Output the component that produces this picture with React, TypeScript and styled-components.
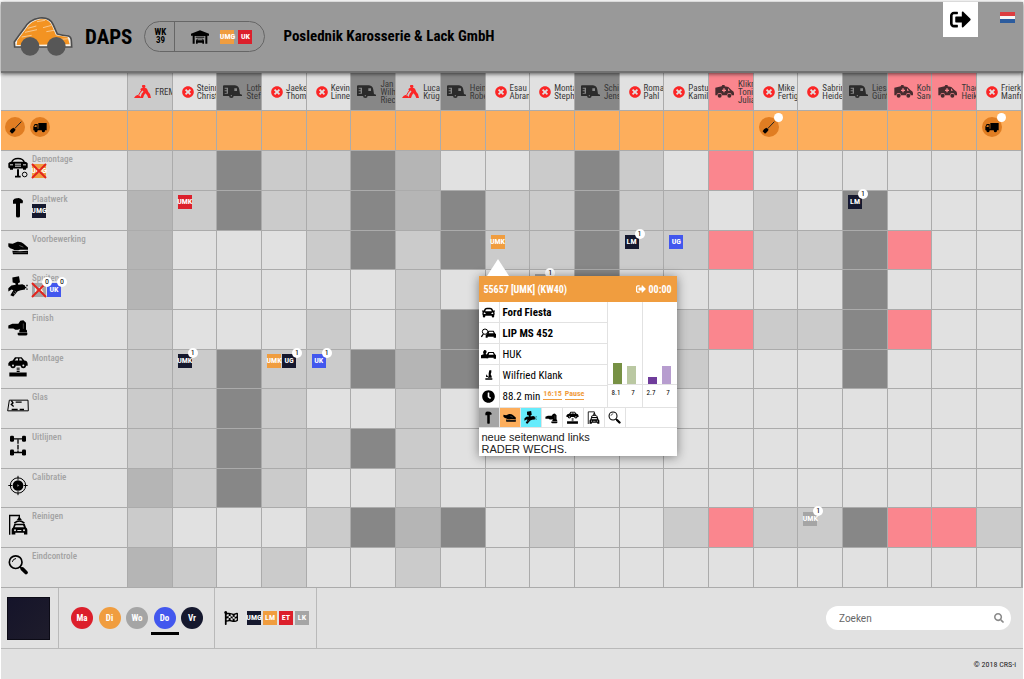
import React from "react";
import styled, { createGlobalStyle, css } from "styled-components";
import { FaSearch, FaTimesCircle, FaClock, FaSignOutAlt, FaFlagCheckered, FaCar } from "react-icons/fa";

const condensed = `"Roboto Condensed", "Liberation Sans Narrow", Roboto, sans-serif`;
const colors = {
  red: "#dc1f2b",
  orange: "#f09d3f",
  gray: "#a5a5a5",
  blue: "#4257ee",
  navy: "#15182e",
};
type Tone = keyof typeof colors;
const shades = { l: "#e1e1e1", s: "#cbcbcb", m: "#b5b5b5", d: "#878787", p: "#fa868e" };
type Shade = keyof typeof shades;

const GlobalStyle = createGlobalStyle`
  * { box-sizing: border-box; }
  body { margin: 0; background: #fff; font-family: ${condensed}; color: #000; }
  button { font: inherit; border: 0; padding: 0; background: none; cursor: pointer; color: inherit; }
  svg { display: block; flex: none; }
`;

/* ---------- icons ---------- */

type IconProps = { w: number; h: number };

const LiftedCarFront = ({ w, h }: IconProps) => (
  <svg width={w} height={h} viewBox="0 0 60 62">
    <path d="M11 16Q14 4 30 4T49 16" fill="none" stroke="#000" strokeWidth="4" />
    <path d="M1 18Q5 12 12 14H48Q55 12 59 18V31Q59 34 54 34V38H45V34H15V38H6V34Q1 33 1 30Z" />
    <path d="M6 23h9M45 23h9M21 21h18M21 27h18" stroke="#e1e1e1" strokeWidth="3" />
    <path d="M27 36h6v20h5v5H21v-5h6z" />
    <circle cx="50" cy="52" r="7" fill="none" stroke="#000" strokeWidth="3" />
  </svg>
);
const Hammer = ({ w, h }: IconProps) => (
  <svg width={w} height={h} viewBox="0 0 60 62">
    <path d="M15 9Q19 2 28 3Q38 1 45 11L44 18H36V57Q36 61 30 61T24 57V20H15Z" />
  </svg>
);
const SandingHand = ({ w, h }: IconProps) => (
  <svg width={w} height={h} viewBox="0 0 60 62">
    <path d="M1 18L14 20L28 14Q40 13 46 19L60 31V38H36Q22 42 15 36Q5 34 1 28Z" />
    <path d="M34 25L46 30" stroke="#888" strokeWidth="2" />
    <path d="M13 41Q34 43 60 41V51H15Z" />
    <path d="M16 46H58" stroke="#999" strokeWidth="1" />
  </svg>
);
const SprayGun = ({ w, h }: IconProps) => (
  <svg width={w} height={h} viewBox="0 0 60 62">
    <path d="M13 4L33 0L36 18L30 21L31 26L43 24L51 28V40L38 42L29 45L16 61L7 57L16 42L11 40L1 46V36L10 28L23 26L22 21L14 19Z" />
    <path d="M50 34h5M57 26v4M57 37v4" stroke="#000" strokeWidth="4" />
    <path d="M20 45l5 4M16 50l5 4" stroke="#bbb" strokeWidth="2" />
  </svg>
);
const Polisher = ({ w, h }: IconProps) => (
  <svg width={w} height={h} viewBox="0 0 60 62">
    <path d="M1 28L13 23H31L37 14L46 12L54 20V40L57 43V49H34V44L36 38L30 41H22L16 37H1Z" />
    <path d="M29 50H58V55Q58 58 53 58H34Q29 58 29 55Z" />
    <path d="M46 22V38" stroke="#666" strokeWidth="2" />
  </svg>
);
const CarOnLift = ({ w, h }: IconProps) => (
  <svg width={w} height={h} viewBox="0 0 60 62">
    <path d="M1 21Q4 14 14 13L21 3H41L49 13Q58 13 59 23V29H1Z" />
    <path d="M20 13L25 7H30V13ZM34 7H39L43 13H34Z" fill="#e1e1e1" />
    <circle cx="15" cy="28" r="8" />
    <circle cx="15" cy="28" r="3" fill="#e1e1e1" />
    <circle cx="46" cy="28" r="8" />
    <circle cx="46" cy="28" r="3" fill="#e1e1e1" />
    <path d="M26 36h9M26 41h9M26 46h9" stroke="#000" strokeWidth="3" />
    <path d="M4 49H56V61H4Z" />
  </svg>
);
const WindowGlass = ({ w, h }: IconProps) => (
  <svg width={w} height={h} viewBox="0 0 66 62">
    <path d="M7 15H63L64 47H2Z" fill="none" stroke="#000" strokeWidth="3" />
    <path d="M13 16l5 7-5 5 7 6M26 21h18M14 43h18M38 43h13" fill="none" stroke="#000" strokeWidth="4" />
  </svg>
);
const WheelAxles = ({ w, h }: IconProps) => (
  <svg width={w} height={h} viewBox="0 0 60 62">
    <path d="M30 12V52" stroke="#000" strokeWidth="4" strokeDasharray="14 3" />
    <path d="M12 11H48M12 52H48" stroke="#000" strokeWidth="4" />
    <rect x="6" y="2" width="12" height="18" rx="4" />
    <rect x="42" y="2" width="12" height="18" rx="4" />
    <rect x="6" y="43" width="12" height="18" rx="4" />
    <rect x="42" y="43" width="12" height="18" rx="4" />
  </svg>
);
const Target = ({ w, h }: IconProps) => (
  <svg width={w} height={h} viewBox="0 0 60 62">
    <circle cx="30" cy="31" r="23" fill="none" stroke="#000" strokeWidth="3" />
    <circle cx="30" cy="31" r="16" />
    <path d="M30 2V14M30 48V60M1 31H13M47 31H59" stroke="#000" strokeWidth="3" />
    <path d="M28 27L34 31L28 35Z" fill="#888" />
  </svg>
);
const CarWash = ({ w, h }: IconProps) => (
  <svg width={w} height={h} viewBox="0 0 60 62">
    <path d="M5 62V4H34V12" fill="none" stroke="#000" strokeWidth="4" />
    <path d="M34 7L42 18H26Z" />
    <path d="M19 27Q34 14 49 27" fill="none" stroke="#000" strokeWidth="5" />
    <path d="M19 29H50L54 40Q58 42 58 47V61H48V56H22V61H11V47Q11 42 15 40Z" />
    <path d="M23 33H45L48 39H20Z" fill="#e1e1e1" />
    <circle cx="21" cy="48" r="3" fill="#e1e1e1" />
    <circle cx="48" cy="48" r="3" fill="#e1e1e1" />
    <path d="M28 49h12" stroke="#e1e1e1" strokeWidth="3" />
  </svg>
);
const Magnifier = ({ w, h }: IconProps) => (
  <svg width={w} height={h} viewBox="0 0 60 62">
    <circle cx="23" cy="24" r="19" fill="none" stroke="#000" strokeWidth="5" />
    <path d="M13 23Q15 14 24 13" fill="none" stroke="#000" strokeWidth="3" />
    <path d="M36 38L42 44" stroke="#000" strokeWidth="5" />
    <path d="M43 44L54 55" stroke="#000" strokeWidth="11" strokeLinecap="round" />
  </svg>
);
const Caravan = () => (
  <svg width="19" height="13" viewBox="0 0 57 39" fill="#2b2b2b">
    <path
      fillRule="evenodd"
      d="M3 1H36Q47 2 49 14L51 27L57 29V33H1Q0 33 0 30V4Q0 1 3 1ZM5 8V11H11V16H5V19H11V24H5V26H15V8ZM34 10V18H42V10Z"
    />
    <circle cx="25" cy="32" r="7" />
    <circle cx="25" cy="32" r="2" fill="#878787" />
  </svg>
);
const Digger = () => (
  <svg width="17" height="13" viewBox="0 0 51 39" fill="#fb2626">
    <circle cx="29" cy="4" r="5" />
    <path d="M19 12L30 6L39 11L43 21L48 27L51 39H43L39 30L34 25L30 31L27 39H19L23 26L28 20L27 16L22 20Z" />
    <path d="M22 11L48 33M21 18L14 30" stroke="#fb2626" strokeWidth="3" />
    <path d="M0 39Q4 31 10 30Q18 29 22 39Z" />
  </svg>
);
const Ambulance = () => (
  <svg width="19" height="13" viewBox="0 0 57 39" fill="#472c2f">
    <path d="M1 8L20 4L22 0H29V4L40 6L50 16Q57 19 57 24V31H50A7 7 0 0 0 36 31H21A7 7 0 0 0 7 31H1Z" />
    <path d="M25 10h4v4h4v4h-4v4h-4v-4h-4v-4h4z" fill="#fa868e" />
    <path d="M39 10l6 7h-6z" fill="#fa868e" />
    <circle cx="14" cy="32" r="6" />
    <circle cx="43" cy="32" r="6" />
  </svg>
);
const Broom = () => (
  <svg width="13" height="13" viewBox="0 0 39 39">
    <path d="M37 2L17 23" stroke="#222" strokeWidth="3" />
    <path d="M13 20L20 26L15 33L9 38L2 31L6 25Z" />
  </svg>
);
const Truck = () => (
  <svg width="14" height="11" viewBox="0 0 42 33">
    <path
      fillRule="evenodd"
      d="M16 3H41V25H36A5 5 0 0 1 26 25H14A5 5 0 0 1 4 25H1V14L5 6H14V20H16ZM6 10L4 15H11V10Z"
    />
    <circle cx="9" cy="27" r="4" />
    <circle cx="31" cy="27" r="4" />
  </svg>
);
const Garage = () => (
  <svg width="18" height="14" viewBox="0 0 54 42">
    <path d="M27 1L54 11V17H49V41H43V18H11V41H5V17H0V11Z" />
    <path d="M14 20h26v3H14z" />
    <path
      fillRule="evenodd"
      d="M18 26H36L39 32V41H34V38H20V41H15V32ZM20 28L19 31H35L34 28Z"
    />
  </svg>
);
const PlateSearch = () => (
  <svg width="15" height="10" viewBox="0 0 45 30">
    <circle cx="12" cy="11" r="8" fill="none" stroke="#000" strokeWidth="3" />
    <path d="M7 18L1 27" stroke="#000" strokeWidth="4" />
    <path fillRule="evenodd" d="M22 8H38L42 16L45 19V29H38V26H20V29H14V22L19 16ZM25 11L23 16H38L36 11Z" />
  </svg>
);
const PersonCar = () => (
  <svg width="15" height="10" viewBox="0 0 45 30">
    <path d="M10 3Q17 2 17 9L14 15L20 18V28H0V19L8 16L6 9Z" />
    <path fillRule="evenodd" d="M22 9H38L42 16L45 19V29H38V26H22V28H17V17ZM25 12L23 17H38L36 12Z" />
  </svg>
);
const Seated = () => (
  <svg width="8" height="10" viewBox="0 0 24 30">
    <path d="M13 1h6v6l-2 6 3 6v4H8l3-4V10ZM4 13l6 8H3ZM1 25H22V29H1Z" />
  </svg>
);
const CarLogo = () => (
  <svg width="60" height="40" viewBox="0 0 180 120" aria-label="DAPS">
    <path
      d="M5 90L4 75Q18 55 34 34Q48 8 80 3Q110 0 120 22L133 51Q148 55 166 57Q175 60 175 72L176 90Z"
      fill="#f7f2ea"
      stroke="#4d4d4d"
      strokeWidth="5"
    />
    <path d="M11 84L13 70Q28 50 40 34Q54 12 82 7Q106 4 116 24L129 55Q150 58 164 61L170 82Z" fill="#f39322" />
    <path
      d="M44 34L70 27M36 46L72 38M90 32L116 25M100 44L123 40M26 60L56 55M134 68L166 65M72 14L96 10"
      stroke="#fbe3c4"
      strokeWidth="2"
    />
    <circle cx="51" cy="88" r="28" fill="#575757" />
    <circle cx="130" cy="88" r="28" fill="#575757" />
  </svg>
);
const DutchFlag = () => (
  <svg width="15" height="11" viewBox="0 0 15 11">
    <rect width="15" height="4" fill="#dc3d40" />
    <rect y="4" width="15" height="3" fill="#f6f6f6" />
    <rect y="7" width="15" height="4" fill="#2c5c9e" />
  </svg>
);

/* ---------- shared parts ---------- */

const ChipBox = styled.span<{ $tone: Tone }>`
  position: relative;
  display: flex;
  align-items: center;
  justify-content: center;
  width: 14px;
  height: 14px;
  background: ${(p) => colors[p.$tone]};
  color: #fff;
  font-size: 8px;
  font-weight: 700;
  line-height: 14px;
  white-space: nowrap;
`;
const Badge = styled.span`
  position: absolute;
  top: -6px;
  right: -6px;
  z-index: 1;
  width: 10px;
  height: 10px;
  border-radius: 50%;
  background: #fff;
  color: #000;
  font-size: 8px;
  font-weight: 400;
  line-height: 10px;
  text-align: center;
`;
const CrossMark = styled.svg`
  position: absolute;
  inset: -1px;
`;
type ChipData = { t: string; tone: Tone; n?: number; crossed?: boolean };
const Chip = ({ t, tone, n, crossed }: ChipData) => (
  <ChipBox $tone={tone}>
    {t}
    {crossed && (
      <CrossMark width="16" height="16" viewBox="0 0 16 16">
        <path d="M1 1L15 15M15 1L1 15" stroke="#e3241d" strokeWidth="2" />
      </CrossMark>
    )}
    {n !== undefined && <Badge>{n}</Badge>}
  </ChipBox>
);

/* ---------- top bar ---------- */

const Page = styled.div`
  margin: 2px 1px 0;
  min-height: calc(100vh - 2px);
  background: #e1e1e1;
`;
const TopBar = styled.header`
  position: relative;
  z-index: 2;
  display: flex;
  align-items: center;
  height: 71px;
  padding: 0 8px 0 12px;
  background: #999;
  border-bottom: 2px solid #717171;
  box-shadow: 0 1px 4px rgba(0, 0, 0, 0.6);
`;
const Brand = styled.h1`
  margin: 0 12px;
  font-size: 21px;
  line-height: 26px;
`;
const WeekPill = styled.div`
  display: flex;
  align-items: center;
  height: 31px;
  border: 1px solid #666;
  border-radius: 16px;
`;
const Week = styled.div`
  width: 30px;
  height: 29px;
  padding: 6px 0 0 1px;
  border-right: 1px solid #666;
  font-size: 9px;
  font-weight: 700;
  line-height: 8px;
  text-align: center;
`;
const PillChips = styled.div`
  display: flex;
  align-items: center;
  gap: 4px;
  padding: 0 12px 0 16px;
  svg { margin-right: 7px; }
`;
const Company = styled.h2`
  margin: 0 auto 2px 18px;
  font-size: 15px;
  line-height: 20px;
`;
const Exit = styled.button`
  align-self: flex-start;
  display: flex;
  align-items: center;
  justify-content: center;
  width: 35px;
  height: 35px;
  margin-right: 22px;
  background: #fff;
  font-size: 21px;
`;
const Language = styled.button`
  align-self: flex-start;
  margin-top: 10px;
`;

/* ---------- planning board ---------- */

const Board = styled.table`
  width: 100%;
  table-layout: fixed;
  border-collapse: separate;
  border-spacing: 0;
  border-right: 1px solid #ababab;
  th, td {
    padding: 0;
    border-right: 1px solid #ababab;
    border-bottom: 1px solid #ababab;
    vertical-align: top;
    text-align: left;
    font-weight: 400;
  }
`;
const LabelCol = styled.col`
  width: 127px;
`;
const StaffRow = styled.tr`
  height: 38px;
`;
const StatusRow = styled.tr`
  height: 40px;
  background: #fdae5c;
`;
const TaskRow = styled.tr`
  height: 40px;
  &:nth-child(3n) { height: 39px; }
`;
const StaffCell = styled.th<{ $shade: Shade }>`
  background: ${(p) => shades[p.$shade]};
`;
const Staff = styled.div<{ $free: boolean }>`
  display: flex;
  align-items: center;
  gap: ${(p) => (p.$free ? 3 : 4)}px;
  height: 37px;
  padding-left: ${(p) => (p.$free ? 9 : 6)}px;
  overflow: hidden;
  color: #383838;
  font-size: 9px;
  line-height: 8px;
  white-space: nowrap;
`;
const NameLine = styled.span`
  display: block;
`;
const Cell = styled.td<{ $shade?: Shade }>`
  position: relative;
  ${(p) => p.$shade && css`background: ${shades[p.$shade]};`}
`;
const Chips = styled.div`
  display: flex;
  gap: 1px;
  padding: 4px 0 0 5px;
`;
const Discs = styled.div<{ $lead: number }>`
  display: flex;
  gap: 5px;
  padding: 6px 0 0 ${(p) => p.$lead}px;
`;
const Disc = styled.span`
  position: relative;
  display: flex;
  align-items: center;
  justify-content: center;
  width: 20px;
  height: 20px;
  border-radius: 50%;
  background: #e07d22;
`;
const Dot = styled.span`
  position: absolute;
  top: -4px;
  right: -4px;
  width: 9px;
  height: 9px;
  border-radius: 50%;
  background: #fff;
`;
const Task = styled.div`
  display: flex;
  gap: 3px;
  height: 38px;
  padding-left: 6px;
`;
const TaskIcon = styled.div`
  display: flex;
  justify-content: center;
  width: 22px;
  padding-top: 6px;
`;
const TaskName = styled.div`
  padding-top: 3px;
  color: #a3a3a3;
  font-size: 9px;
  font-weight: 500;
  line-height: 10px;
`;
const TaskChips = styled.div`
  display: flex;
  gap: 1px;
`;

/* ---------- order card ---------- */

const Card = styled.section`
  position: absolute;
  top: 45px;
  left: -7px;
  z-index: 5;
  width: 198px;
  background: #fff;
  box-shadow: 0 1px 10px rgba(0, 0, 0, 0.45);
  &::before {
    content: "";
    position: absolute;
    top: -17px;
    left: 8px;
    border: 11px solid transparent;
    border-top: 0;
    border-bottom: 17px solid #fff;
  }
`;
const CardHead = styled.header`
  display: flex;
  align-items: center;
  gap: 3px;
  height: 26px;
  padding: 0 5px;
  background: #f09d3f;
  color: #fff;
  font-size: 10px;
  font-weight: 700;
  span { margin-right: auto; }
`;
const CardBody = styled.div`
  display: flex;
  height: 105px;
`;
const Facts = styled.div`
  flex: 1;
  display: grid;
  grid-template-rows: repeat(5, 1fr);
`;
const Fact = styled.div<{ $strong?: boolean }>`
  display: flex;
  border-bottom: 1px solid #e2e2e2;
  font-size: 11px;
  font-weight: ${(p) => (p.$strong ? 700 : 400)};
  &:last-child { border-bottom: 0; }
`;
const FactIcon = styled.div`
  display: flex;
  align-items: center;
  justify-content: center;
  width: 21px;
  border-right: 1px solid #e2e2e2;
`;
const FactText = styled.div`
  display: flex;
  align-items: center;
  gap: 3px;
  padding-left: 3px;
`;
const TimeLink = styled.a`
  margin-bottom: 4px;
  border-bottom: 1px solid #f09d3f;
  color: #f09d3f;
  font-size: 8px;
  font-weight: 700;
  line-height: 10px;
  text-decoration: none;
`;
const Chart = styled.div`
  width: 35px;
  border-left: 1px solid #e2e2e2;
`;
const Bars = styled.div`
  display: flex;
  align-items: flex-end;
  justify-content: center;
  gap: 5px;
  height: 83px;
  border-bottom: 1px solid #e2e2e2;
`;
const Bar = styled.div<{ $fill: string }>`
  width: 9px;
  background: ${(p) => p.$fill};
`;
const Values = styled.div`
  display: flex;
  padding-top: 3px;
  font-size: 7px;
  line-height: 10px;
  text-align: center;
  span { flex: 1; }
`;
const Steps = styled.div`
  display: flex;
  height: 21px;
  border-top: 1px solid #e2e2e2;
  border-bottom: 1px solid #e2e2e2;
`;
const Step = styled.button<{ $fill?: string }>`
  display: flex;
  align-items: center;
  justify-content: center;
  width: 21px;
  border-right: 1px solid #e2e2e2;
  background: ${(p) => p.$fill ?? "#fff"};
`;
const Note = styled.p`
  margin: 0;
  padding: 3px 3px 1px;
  color: #222;
  font-family: "Liberation Sans", Arial, sans-serif;
  font-size: 11px;
  line-height: 12px;
`;

const OrderCard = () => (
  <Card>
    <CardHead>
      <span>55657 [UMK] (KW40)</span>
      <FaSignOutAlt size={10} />
      00:00
    </CardHead>
    <CardBody>
      <Facts>
        <Fact $strong>
          <FactIcon><FaCar size={13} /></FactIcon>
          <FactText>Ford Fiesta</FactText>
        </Fact>
        <Fact $strong>
          <FactIcon><PlateSearch /></FactIcon>
          <FactText>LIP MS 452</FactText>
        </Fact>
        <Fact>
          <FactIcon><PersonCar /></FactIcon>
          <FactText>HUK</FactText>
        </Fact>
        <Fact>
          <FactIcon><Seated /></FactIcon>
          <FactText>Wilfried Klank</FactText>
        </Fact>
        <Fact>
          <FactIcon><FaClock size={13} /></FactIcon>
          <FactText>
            88.2 min <TimeLink href="#time">16:15</TimeLink>
            <TimeLink href="#pause">Pause</TimeLink>
          </FactText>
        </Fact>
      </Facts>
      <Chart>
        <Bars>
          <Bar $fill="#779144" style={{ height: 21 }} />
          <Bar $fill="#bac8a2" style={{ height: 18 }} />
        </Bars>
        <Values><span>8.1</span><span>7</span></Values>
      </Chart>
      <Chart>
        <Bars>
          <Bar $fill="#6f3c9b" style={{ height: 7 }} />
          <Bar $fill="#b79dcf" style={{ height: 18 }} />
        </Bars>
        <Values><span>2.7</span><span>7</span></Values>
      </Chart>
    </CardBody>
    <Steps>
      <Step $fill="#a5a5a5" aria-label="Plaatwerk"><Hammer w={13} h={13} /></Step>
      <Step $fill="#fdae5c" aria-label="Voorbewerking"><SandingHand w={13} h={13} /></Step>
      <Step $fill="#66ecfc" aria-label="Spuiten"><SprayGun w={13} h={13} /></Step>
      <Step aria-label="Finish"><Polisher w={13} h={13} /></Step>
      <Step aria-label="Montage"><CarOnLift w={13} h={13} /></Step>
      <Step aria-label="Reinigen"><CarWash w={13} h={13} /></Step>
      <Step aria-label="Eindcontrole"><Magnifier w={13} h={13} /></Step>
    </Steps>
    <Note>
      neue seitenwand links
      <br />
      RADER WECHS.
    </Note>
  </Card>
);

/* ---------- bottom bars ---------- */

const BottomBar = styled.div`
  display: flex;
  height: 61px;
  border-bottom: 1px solid #b9b9b9;
`;
const Panel = styled.div<{ $lead: number; $tail: number }>`
  display: flex;
  align-items: center;
  padding: 0 ${(p) => p.$tail}px 0 ${(p) => p.$lead}px;
  border-right: 1px solid #b9b9b9;
`;
const Swatch = styled.div`
  width: 43px;
  height: 43px;
  border: 1px solid #0c0b16;
  background: linear-gradient(135deg, #15142a, #1e1c2b);
`;
const Days = styled.div`
  display: flex;
  justify-content: space-between;
  width: 132px;
`;
const Day = styled.button<{ $tone: Tone; $active?: boolean }>`
  position: relative;
  width: 22px;
  height: 22px;
  border-radius: 50%;
  background: ${(p) => colors[p.$tone]};
  color: #fff;
  font-size: 9px;
  font-weight: 700;
  ${(p) =>
    p.$active &&
    css`
      &::after {
        content: "";
        position: absolute;
        left: -3px;
        right: -3px;
        bottom: -6px;
        height: 3px;
        background: #000;
      }
    `}
`;
const FlagChips = styled.div`
  display: flex;
  gap: 2px;
  margin-left: 9px;
`;
const Search = styled.label`
  display: flex;
  align-items: center;
  width: 185px;
  height: 24px;
  margin: auto 12px auto auto;
  padding: 0 7px 0 13px;
  border-radius: 12px;
  background: #fff;
  color: #8a8a8a;
`;
const SearchInput = styled.input`
  flex: 1;
  min-width: 0;
  padding: 0;
  border: 0;
  outline: 0;
  background: none;
  font: 10px Roboto, sans-serif;
  &::placeholder { color: #666; opacity: 1; }
`;
const Legal = styled.footer`
  height: 28px;
  padding: 11px 7px 0;
  font-size: 8px;
  line-height: 10px;
  text-align: right;
  color: #222;
`;

/* ---------- data ---------- */

type Kind = "free" | "van" | "dig" | "sick";
const kindShade: Record<Kind, Shade> = { free: "l", van: "d", dig: "s", sick: "p" };
const staff: [Kind, string[]][] = [
  ["dig", ["FREMD"]],
  ["free", ["Steinmann", "Christian"]],
  ["van", ["Lothar", "Stefan"]],
  ["free", ["Jaekel", "Thomas"]],
  ["free", ["Kevin", "Linnert"]],
  ["van", ["Jan", "Wilhelm", "Riechert"]],
  ["dig", ["Luca", "Krüger"]],
  ["van", ["Heiner", "Robert"]],
  ["free", ["Esau", "Abramo"]],
  ["free", ["Montag", "Stephan"]],
  ["van", ["Schinke", "Jens"]],
  ["free", ["Roman", "Pahl"]],
  ["free", ["Pastuch", "Kamil"]],
  ["sick", ["Klikner", "Toni-", "Julian"]],
  ["free", ["Mike", "Fertig"]],
  ["free", ["Sabrina", "Heider"]],
  ["van", ["Liesel", "Günter"]],
  ["sick", ["Kohr", "Sandra"]],
  ["sick", ["Thacke", "Heiko"]],
  ["free", ["Frierk", "Manfred"]],
];

type TaskData = {
  name: string;
  icon: React.ReactNode;
  shades: string;
  own?: ChipData[];
  jobs?: Record<number, ChipData[]>;
  card?: number;
};
const tasks: TaskData[] = [
  {
    name: "Demontage",
    icon: <LiftedCarFront w={20} h={21} />,
    shades: "ssdssdmllsdslpllllll",
    own: [{ t: "UMG", tone: "orange", crossed: true }],
  },
  {
    name: "Plaatwerk",
    icon: <Hammer w={20} h={21} />,
    shades: "msdssdmdssdsslsldlll",
    own: [{ t: "UMG", tone: "navy" }],
    jobs: { 1: [{ t: "UMK", tone: "red" }], 16: [{ t: "LM", tone: "navy", n: 1 }] },
  },
  {
    name: "Voorbewerking",
    icon: <SandingHand w={20} h={21} />,
    shades: "mlllsdsdssdsspssdpll",
    jobs: {
      8: [{ t: "UMK", tone: "orange" }],
      11: [{ t: "LM", tone: "navy", n: 1 }],
      12: [{ t: "UG", tone: "blue" }],
    },
    card: 8,
  },
  {
    name: "Spuiten",
    icon: <SprayGun w={20} h={21} />,
    shades: "mlllllsllldllllldlll",
    own: [
      { t: "LK", tone: "gray", crossed: true, n: 0 },
      { t: "UK", tone: "blue", n: 0 },
    ],
    jobs: { 9: [{ t: "UMK", tone: "gray", n: 1 }] },
  },
  { name: "Finish", icon: <Polisher w={20} h={21} />, shades: "slllslsdlllsspssdpll" },
  {
    name: "Montage",
    icon: <CarOnLift w={20} h={21} />,
    shades: "ssdssdmdllllsllldlll",
    jobs: {
      1: [{ t: "UMK", tone: "navy", n: 1 }],
      3: [{ t: "UMK", tone: "orange" }, { t: "UG", tone: "navy", n: 1 }],
      4: [{ t: "UK", tone: "blue", n: 1 }],
    },
  },
  { name: "Glas", icon: <WindowGlass w={22} h={21} />, shades: "ssdsllslllllllllllll" },
  { name: "Uitlijnen", icon: <WheelAxles w={20} h={21} />, shades: "ssdssdslllllllllllll" },
  { name: "Calibratie", icon: <Target w={20} h={21} />, shades: "msdsllslllllllllllll" },
  {
    name: "Reinigen",
    icon: <CarWash w={20} h={21} />,
    shades: "slllsdmdlsllspssdpps",
    jobs: { 15: [{ t: "UMK", tone: "gray", n: 1 }] },
  },
  { name: "Eindcontrole", icon: <Magnifier w={20} h={21} />, shades: "mslsllslllllllllllll" },
];

const days: [string, Tone][] = [
  ["Ma", "red"],
  ["Di", "orange"],
  ["Wo", "gray"],
  ["Do", "blue"],
  ["Vr", "navy"],
];

const KindIcon = ({ kind }: { kind: Kind }) => {
  if (kind === "free") return <FaTimesCircle size={12} color="#fb2626" />;
  if (kind === "van") return <Caravan />;
  if (kind === "dig") return <Digger />;
  return <Ambulance />;
};

export default function App() {
  return (
    <Page>
      <GlobalStyle />
      <TopBar>
        <CarLogo />
        <Brand>DAPS</Brand>
        <WeekPill>
          <Week>
            WK
            <br />
            39
          </Week>
          <PillChips>
            <Garage />
            <Chip t="UMG" tone="orange" />
            <Chip t="UK" tone="red" />
          </PillChips>
        </WeekPill>
        <Company>Poslednik Karosserie &amp; Lack GmbH</Company>
        <Exit aria-label="Uitloggen">
          <FaSignOutAlt />
        </Exit>
        <Language aria-label="Nederlands">
          <DutchFlag />
        </Language>
      </TopBar>

      <Board>
        <colgroup>
          <LabelCol />
          {staff.map((_, i) => (
            <col key={i} />
          ))}
        </colgroup>
        <tbody>
          <StaffRow>
            <StaffCell $shade="l" />
            {staff.map(([kind, lines], i) => (
              <StaffCell key={i} scope="col" $shade={kindShade[kind]}>
                <Staff $free={kind === "free"}>
                  <KindIcon kind={kind} />
                  <div>
                    {lines.map((line) => (
                      <NameLine key={line}>{line}</NameLine>
                    ))}
                  </div>
                </Staff>
              </StaffCell>
            ))}
          </StaffRow>
          <StatusRow>
            <Cell>
              <Discs $lead={4}>
                <Disc><Broom /></Disc>
                <Disc><Truck /></Disc>
              </Discs>
            </Cell>
            {staff.map((_, i) => (
              <Cell key={i}>
                {(i === 14 || i === 19) && (
                  <Discs $lead={5}>
                    <Disc>
                      {i === 14 ? <Broom /> : <Truck />}
                      <Dot />
                    </Disc>
                  </Discs>
                )}
              </Cell>
            ))}
          </StatusRow>
        </tbody>
        <tbody>
          {tasks.map((task) => (
            <TaskRow key={task.name}>
              <th scope="row">
                <Task>
                  <TaskIcon>{task.icon}</TaskIcon>
                  <TaskName>
                    {task.name}
                    <TaskChips>
                      {task.own?.map((chip) => (
                        <Chip key={chip.t} {...chip} />
                      ))}
                    </TaskChips>
                  </TaskName>
                </Task>
              </th>
              {[...task.shades].map((shade, i) => (
                <Cell key={i} $shade={shade as Shade}>
                  {task.jobs?.[i] && (
                    <Chips>
                      {task.jobs[i].map((chip) => (
                        <Chip key={chip.t} {...chip} />
                      ))}
                    </Chips>
                  )}
                  {task.card === i && <OrderCard />}
                </Cell>
              ))}
            </TaskRow>
          ))}
        </tbody>
      </Board>

      <BottomBar>
        <Panel $lead={6} $tail={8}>
          <Swatch />
        </Panel>
        <Panel $lead={12} $tail={11}>
          <Days>
            {days.map(([day, tone]) => (
              <Day key={day} $tone={tone} $active={day === "Do"}>
                {day}
              </Day>
            ))}
          </Days>
        </Panel>
        <Panel $lead={9} $tail={7}>
          <FaFlagCheckered size={14} />
          <FlagChips>
            <Chip t="UMG" tone="navy" />
            <Chip t="LM" tone="orange" />
            <Chip t="ET" tone="red" />
            <Chip t="LK" tone="gray" />
          </FlagChips>
        </Panel>
        <Search>
          <SearchInput placeholder="Zoeken" aria-label="Zoeken" />
          <FaSearch size={10} />
        </Search>
      </BottomBar>
      <Legal>© 2018 CRS-i</Legal>
    </Page>
  );
}
